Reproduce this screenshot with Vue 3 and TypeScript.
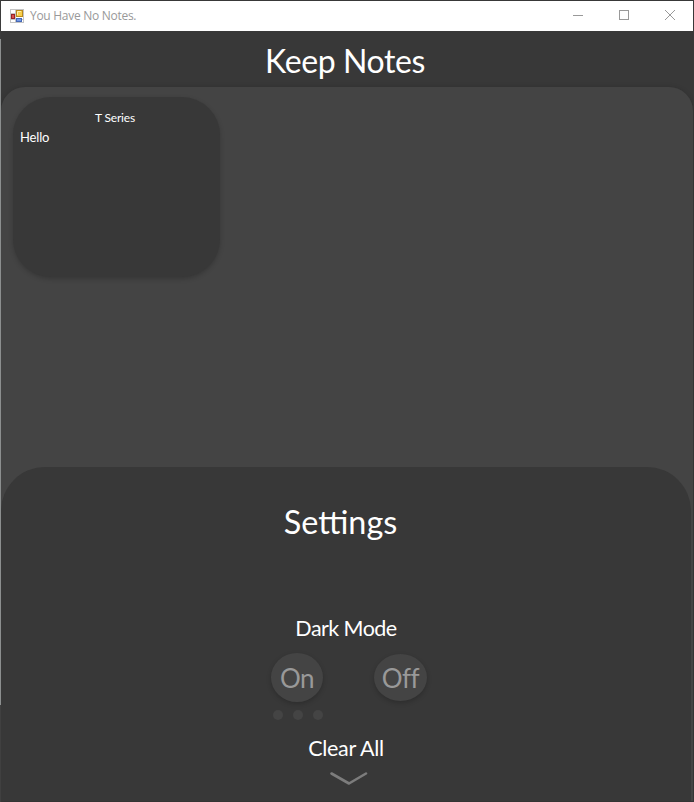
<script setup lang="ts">
import { ref } from 'vue'

interface Note {
  title: string
  body: string
}

const notes = ref<Note[]>([{ title: 'T Series', body: 'Hello' }])
const dots = [1, 2, 3]
</script>

<template>
  <div class="window">
    <header class="titlebar">
      <svg class="app-icon" width="14" height="14" viewBox="0 0 14 14">
        <rect x="0.5" y="0.5" width="13" height="13" fill="#fff" stroke="#c4c4c4" />
        <path d="M5.5 0V14M0 4.5H6M0 10.5H14" stroke="#c4c4c4" />
        <rect x="6.5" y="1.5" width="6" height="6" fill="#f8cf4b" stroke="#b98a1c" />
        <path d="M7.5 6V2.5H11" stroke="#fff0a8" fill="none" />
        <rect x="1.5" y="5.5" width="3" height="4" fill="#d9504c" stroke="#982326" />
        <rect x="6.5" y="9.5" width="5" height="3" fill="#7399e8" stroke="#4568b5" />
      </svg>
      <span class="caption">You Have No Notes.</span>
      <div class="controls">
        <svg width="12" height="12" viewBox="0 0 12 12"><path d="M1 6.5H11" /></svg>
        <svg width="12" height="12" viewBox="0 0 12 12"><rect x="1.5" y="1.5" width="9" height="9" /></svg>
        <svg width="12" height="12" viewBox="0 0 12 12"><path d="M1 1L11 11M11 1L1 11" /></svg>
      </div>
    </header>
    <h1 class="heading"><span>Keep Notes</span></h1>
    <main class="board">
      <div class="notes">
        <article v-for="note in notes" :key="note.title" class="note">
          <h2>{{ note.title }}</h2>
          <p>{{ note.body }}</p>
        </article>
      </div>
      <section class="settings">
        <h2 class="settings-title">Settings</h2>
        <h3 class="dark-label">Dark Mode</h3>
        <div class="toggles">
          <button class="toggle on">On</button>
          <button class="toggle off">Off</button>
        </div>
        <div class="dots"><i v-for="d in dots" :key="d"></i></div>
        <div class="clear">Clear All</div>
        <svg class="chevron" width="38" height="15" viewBox="0 0 38 15">
          <path d="M1.5 2.5L19 12.5L36 2.5" />
        </svg>
      </section>
    </main>
  </div>
</template>

<style>
body {
  margin: 0;
  background: #383838;
}
</style>

<style scoped>
.window {
  box-sizing: border-box;
  width: 694px;
  height: 802px;
  padding: 1px 1px 1px 0;
  border-style: solid;
  border-width: 0 0 0 1px;
  border-image: linear-gradient(#3b3b3b 0 40px, #8c8f8f 40px 704px, #404040 704px) 1;
  background: #383838;
  font-family: Lato, "Open Sans", sans-serif;
  color: #fff;
  overflow: hidden;
}
h1, h2, h3, p {
  margin: 0;
  font-weight: 400;
}
.titlebar {
  display: flex;
  align-items: center;
  height: 30px;
  padding-left: 9px;
  background: #fff;
}
.app-icon {
  margin-top: -1px;
}
.caption {
  margin-left: 6px;
  font: 12px/16px "Open Sans", sans-serif;
  letter-spacing: -0.28px;
  color: #999;
}
.controls {
  display: flex;
  gap: 34px;
  margin: -2px 17px 0 auto;
}
.controls svg {
  fill: none;
  stroke: #999;
}
.heading {
  height: 56px;
  padding-right: 4px;
  text-align: center;
  font-size: 32px;
  line-height: 59px;
  letter-spacing: -0.4px;
}
.board {
  display: flex;
  flex-direction: column;
  height: 714px;
  border-radius: 24px 24px 0 0;
  background: #444;
  box-shadow: 0 0 5px rgba(0, 0, 0, 0.15);
}
.notes {
  box-sizing: border-box;
  height: 380px;
  padding: 10px 12px;
}
.note {
  box-sizing: border-box;
  width: 207px;
  height: 180px;
  padding: 12px 7px;
  border-radius: 38px;
  background: #383838;
  box-shadow: 0 2px 5px rgba(0, 0, 0, 0.2);
  font-size: 13px;
  line-height: 20px;
  letter-spacing: -0.15px;
}
.note h2 {
  padding-right: 3px;
  font-size: 12px;
  line-height: 18px;
  text-align: center;
}
.settings {
  display: flex;
  flex-direction: column;
  align-items: center;
  box-sizing: border-box;
  width: 690px;
  height: 334px;
  padding-top: 32px;
  border-radius: 44px 44px 0 0;
  background: #383838;
}
.settings-title {
  margin-right: 11px;
  font-size: 32.4px;
  line-height: 46px;
}
.dark-label {
  margin-top: 68px;
  font-size: 21.5px;
  line-height: 30px;
  letter-spacing: -0.55px;
}
.toggles {
  display: flex;
  align-items: center;
  gap: 51px;
  height: 50px;
  margin: 9px 0 0 6px;
}
.toggle {
  width: 52px;
  height: 49px;
  padding: 2px 0 0;
  border: 0;
  border-radius: 50%;
  background: #444;
  box-shadow: 0 2px 5px rgba(0, 0, 0, 0.2);
  font: 26px/44px Lato, sans-serif;
  letter-spacing: -0.5px;
  color: #999;
}
.off {
  width: 53px;
  height: 47px;
}
.dots {
  display: flex;
  gap: 10px;
  margin: 8px 96px 0 0;
}
.dots i {
  width: 10px;
  height: 10px;
  border-radius: 50%;
  background: #444;
}
.clear {
  margin-top: 13px;
  font-size: 21.5px;
  line-height: 30px;
  letter-spacing: -0.3px;
}
.chevron {
  margin: 8px 0 0 5px;
  fill: none;
  stroke: #7c7c7c;
  stroke-width: 2.6;
  stroke-linecap: round;
  stroke-linejoin: round;
}
</style>
